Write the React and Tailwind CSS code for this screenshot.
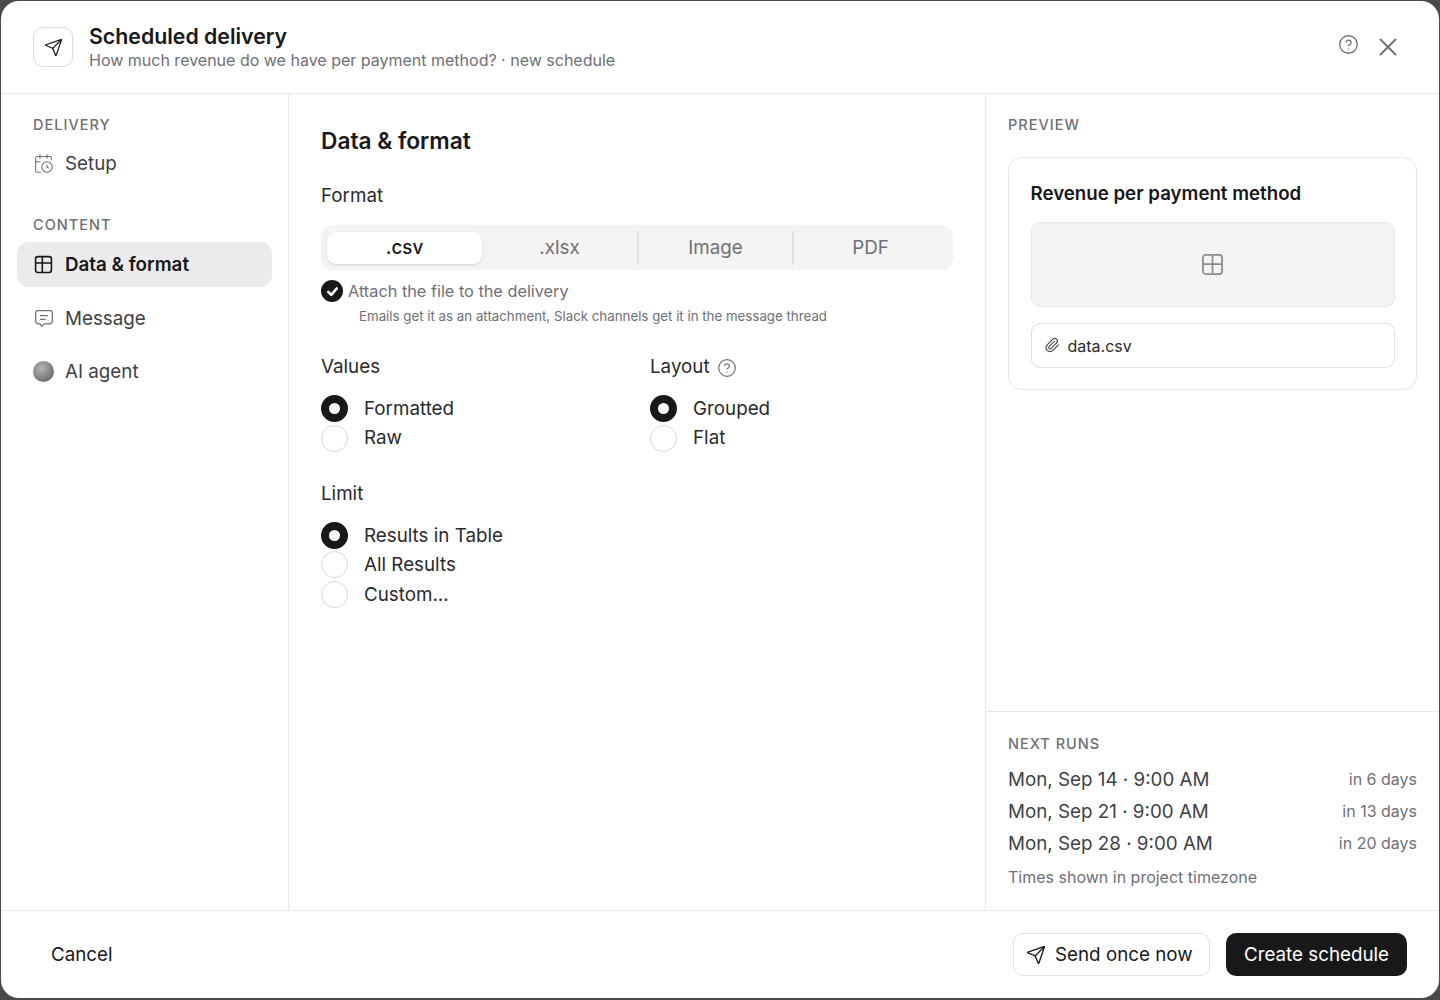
import { HelpCircle, X, Send, CalendarClock, Paperclip } from "lucide-react";

function SectionLabel({ children }) {
  return <div className="text-[14.5px] leading-[20px] font-medium tracking-[0.07em] text-[#6f6f76]">{children}</div>;
}

// the grid icon in the picture is not evenly split, so it is drawn here
function GridIcon({ size, split, strokeWidth, className }) {
  return (
    <svg viewBox="0 0 24 24" width={size} height={size} fill="none" stroke="currentColor" strokeWidth={strokeWidth} className={className}>
      <rect x="2" y="2" width="20" height="20" rx="3" />
      <path d={split === "even" ? "M2 11.5h20M12 2v20" : "M2 10h20M10.5 2v20"} />
    </svg>
  );
}

function MessageIcon({ className }) {
  return (
    <svg viewBox="0 0 24 24" width="20" height="20" fill="none" stroke="currentColor" strokeWidth="1.5" strokeLinejoin="round" strokeLinecap="round" className={className}>
      <path d="M5 3h14a3 3 0 0 1 3 3v10a3 3 0 0 1-3 3h-7l-3 3-1.5-3H5a3 3 0 0 1-3-3V6a3 3 0 0 1 3-3z" />
      <path d="M7.5 9h9M7.5 13.500h6" />
    </svg>
  );
}

function Radio({ label, checked }) {
  return (
    <div className="flex h-[29.4px] items-center gap-[16px]">
      {checked ? (
        <span className="flex h-[27px] w-[27px] items-center justify-center rounded-full bg-[#18181a]">
          <span className="h-[11px] w-[11px] rounded-full bg-white" />
        </span>
      ) : (
        <span className="h-[27px] w-[27px] rounded-full border-[1.5px] border-[#d8d8db] bg-white" />
      )}
      <span className="pt-px text-[18.8px] text-[#2a2a2e]">{label}</span>
    </div>
  );
}

function NavItem({ icon, label, active }) {
  return (
    <div
      className={`flex h-[45px] items-center gap-[11px] rounded-[12px] px-[16px] text-[18.8px] ${
        active ? "bg-[#ebebed] font-semibold text-[#18181a]" : "text-[#3f3f46]"
      }`}
    >
      <span className="flex w-[21px] justify-center">{icon}</span>
      <span className="pt-[2px]">{label}</span>
    </div>
  );
}

function Tab({ label, active, divider }) {
  return (
    <div className="flex flex-1 items-center">
      {divider && <span className="h-[34px] w-[2px] bg-[#e0e0e2]" />}
      <span
        className={`flex h-[32px] flex-1 items-center justify-center rounded-[9px] pt-[2px] text-[18.8px] ${
          active ? "bg-white font-medium text-[#18181a] shadow-sm" : "text-[#6f6f76]"
        }`}
      >
        {label}
      </span>
    </div>
  );
}

function RunRow({ date, rel }) {
  return (
    <div className="flex h-[32px] items-center justify-between">
      <span className="text-[18.8px] text-[#3f3f46]">{date}</span>
      <span className="pb-[2px] text-[16px] text-[#6f6f76]">{rel}</span>
    </div>
  );
}

export default function App() {
  return (
    <div className="h-[1000px] w-[1440px] overflow-hidden bg-[#4a4a4a] pt-px pb-[2px] pl-px font-['Inter',sans-serif]">
      <div className="flex h-full w-[1438px] flex-col rounded-[18px] bg-white">
        {/* Header */}
        <header className="flex h-[93px] shrink-0 items-center justify-between border-b border-[#e8e8ea] pr-[36px] pl-[32px]">
          <div className="flex items-center gap-[16px]">
            <span className="flex h-[40px] w-[40px] items-center justify-center rounded-[10px] border border-[#dcdcdf]">
              <Send size={19} strokeWidth={1.6} className="text-[#18181a]" />
            </span>
            <div>
              <div className="text-[21.3px] leading-[27px] font-semibold text-[#18181a]">Scheduled delivery</div>
              <div className="-mt-px text-[16px] leading-[22px] text-[#6f6f76]">
                How much revenue do we have per payment method? · new schedule
              </div>
            </div>
          </div>
          <div className="flex items-center gap-[14px]">
            <HelpCircle size={21} strokeWidth={1.5} className="-mt-[5px] text-[#6f6f76]" />
            <X size={30} strokeWidth={1.5} className="text-[#6f6f76]" />
          </div>
        </header>

        <div className="flex min-h-0 flex-1">
          {/* Sidebar */}
          <aside className="w-[288px] shrink-0 border-r border-[#e8e8ea] px-[16px] pt-[21px]">
            <div className="pl-[16px]"><SectionLabel>DELIVERY</SectionLabel></div>
            <div className="mt-[6px]">
              <NavItem label="Setup" icon={<CalendarClock size={23} strokeWidth={1.3} className="text-[#6f6f76]" />} />
            </div>
            <div className="mt-[29px] pl-[16px]"><SectionLabel>CONTENT</SectionLabel></div>
            <div className="mt-[7px] flex flex-col gap-[8.3px]">
              <NavItem active label="Data & format" icon={<GridIcon size={19} strokeWidth={2} className="text-[#18181a]" />} />
              <NavItem label="Message" icon={<MessageIcon className="text-[#6f6f76]" />} />
              <NavItem
                label="AI agent"
                icon={<span className="h-[21px] w-[21px] rounded-full bg-[radial-gradient(circle_at_40%_35%,#b5b5b5,#6e6e6e_75%,#9a9a9a)]" />}
              />
            </div>
          </aside>

          {/* Data and format form */}
          <main className="flex-1 border-r border-[#e8e8ea] px-[32px] pt-[30px]">
            <h2 className="text-[22.7px] leading-[34px] font-semibold text-[#18181a]">Data &amp; format</h2>
            <div className="mt-[24px] text-[18.8px] leading-[28px] text-[#2a2a2e]">Format</div>
            <div className="mt-[15px] flex h-[45px] items-center rounded-[12px] bg-[#f4f4f5] px-[6px]">
              <Tab label=".csv" active />
              <Tab label=".xlsx" />
              <Tab label="Image" divider />
              <Tab label="PDF" divider />
            </div>
            <div className="mt-[10px] flex h-[22px] items-center gap-[5px]">
              <span className="flex h-[22px] w-[22px] items-center justify-center rounded-full bg-[#18181a]">
                <svg viewBox="0 0 16 16" className="h-[15px] w-[15px]" fill="none" stroke="white" strokeWidth="2.8" strokeLinecap="round" strokeLinejoin="round">
                  <path d="M3.5 8.500 6.700 11.500 12.500 4.800" />
                </svg>
              </span>
              <span className="text-[16.3px] text-[#6f6f76]">Attach the file to the delivery</span>
            </div>
            <div className="mt-[3px] pl-[38px] text-[13.3px] leading-[22px] text-[#6f6f76]">
              Emails get it as an attachment, Slack channels get it in the message thread
            </div>

            <div className="mt-[26px] grid grid-cols-[329px_1fr]">
              <div>
                <div className="text-[18.8px] leading-[28px] text-[#2a2a2e]">Values</div>
                <div className="mt-[13px]">
                  <Radio label="Formatted" checked />
                  <Radio label="Raw" />
                </div>
              </div>
              <div>
                <div className="flex items-center gap-[7px] text-[18.8px] leading-[28px] text-[#2a2a2e]">
                  Layout
                  <HelpCircle size={20} strokeWidth={1.4} className="mt-px text-[#6f6f76]" />
                </div>
                <div className="mt-[13px]">
                  <Radio label="Grouped" checked />
                  <Radio label="Flat" />
                </div>
              </div>
            </div>

            <div className="mt-[27px] text-[18.8px] leading-[28px] text-[#2a2a2e]">Limit</div>
            <div className="mt-[13px]">
              <Radio label="Results in Table" checked />
              <Radio label="All Results" />
              <Radio label="Custom..." />
            </div>
          </main>

          {/* Preview */}
          <aside className="flex w-[453px] shrink-0 flex-col">
            <div className="flex-1 border-b border-[#e8e8ea] pt-[21px] pr-[22px] pl-[22px]">
              <SectionLabel>PREVIEW</SectionLabel>
              <div className="mt-[22px] rounded-[14px] border-[1.5px] border-[#e4e4e6] p-[21.500px]">
                <div className="pt-px text-[18.7px] leading-[25px] font-semibold text-[#18181a]">Revenue per payment method</div>
                <div className="mt-[16px] flex h-[85px] items-center justify-center rounded-[9px] border border-[#e6e6e8] bg-[#f3f3f4]">
                  <GridIcon size={23} split="even" strokeWidth={1.8} className="text-[#8b8b91]" />
                </div>
                <div className="mt-[16px] flex h-[45px] items-center gap-[8px] rounded-[9px] border-[1.5px] border-[#e0e0e2] pl-[12px]">
                  <Paperclip size={16} strokeWidth={1.6} className="text-[#3f3f46]" />
                  <span className="pt-px text-[16px] text-[#2a2a2e]">data.csv</span>
                </div>
              </div>
            </div>
            <div className="h-[198px] shrink-0 px-[22px] pt-[22px]">
              <SectionLabel>NEXT RUNS</SectionLabel>
              <div className="mt-[10px]">
                <RunRow date="Mon, Sep 14 · 9:00 AM" rel="in 6 days" />
                <RunRow date="Mon, Sep 21 · 9:00 AM" rel="in 13 days" />
                <RunRow date="Mon, Sep 28 · 9:00 AM" rel="in 20 days" />
              </div>
              <div className="mt-[5px] text-[16px] leading-[24px] text-[#6f6f76]">Times shown in project timezone</div>
            </div>
          </aside>
        </div>

        {/* Footer */}
        <footer className="flex h-[88px] shrink-0 items-center justify-between border-t border-[#e8e8ea] pr-[32px] pl-[50px]">
          <span className="pt-px text-[18.8px] text-[#18181a]">Cancel</span>
          <div className="flex items-center gap-[16px]">
            <button className="flex h-[43px] w-[197px] items-center gap-[9px] rounded-[10px] border-[1.5px] border-[#e0e0e2] bg-white pt-px pl-[12px] text-[18.8px] text-[#18181a]">
              <Send size={20} strokeWidth={1.6} />
              Send once now
            </button>
            <button className="flex h-[43px] w-[181px] items-center justify-center rounded-[10px] bg-[#18181a] pt-px text-[18.8px] text-white">
              Create schedule
            </button>
          </div>
        </footer>
      </div>
    </div>
  );
}
